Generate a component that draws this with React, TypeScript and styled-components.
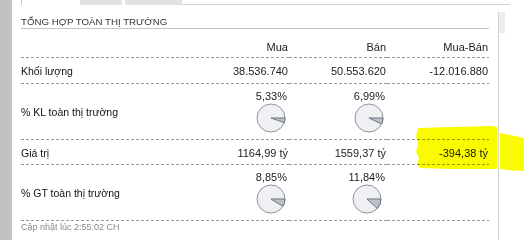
import React from "react";
import styled, { createGlobalStyle } from "styled-components";

const Global = createGlobalStyle`
  html, body { margin: 0; padding: 0; background: #fff; }
  body { width: 524px; height: 240px; overflow: hidden; font-family: "Liberation Sans", Arial, sans-serif; }
`;

const Page = styled.div`
  position: relative;
  display: flex;
  width: 524px;
  height: 240px;
  overflow: hidden;
  background: #fff;
`;

const LeftStrip = styled.div`
  width: 12px;
  flex: none;
  background: #c2c2c2;
`;

const Main = styled.div`
  flex: 1;
  display: flex;
  flex-direction: column;
  min-width: 0;
`;

const TabBar = styled.div`
  display: flex;
  height: 5px;
  flex: none;
`;

const TabSpacer = styled.div`
  width: 9px;
`;

const Tab = styled.div<{ $active?: boolean; $w: number; $gap?: number }>`
  width: ${(p) => p.$w}px;
  margin-left: ${(p) => p.$gap ?? 0}px;
  background: ${(p) => (p.$active ? "#fff" : "#e2e2e2")};
  border-left: ${(p) => (p.$active ? "1px solid #c8c8c8" : "none")};
  box-sizing: border-box;
`;

const TabFill = styled.div`
  flex: 1;
  border-bottom: 1px solid #d4d4d4;
  margin-right: 14px;
`;

const Body = styled.div`
  flex: 1;
  display: flex;
  margin-top: 7px;
`;

const Panel = styled.div`
  width: 487px;
  flex: none;
  box-sizing: border-box;
  border-right: 1px solid #d2d2d2;
  padding: 3px 9px 0 9px;
  display: flex;
  flex-direction: column;
`;

const Scroll = styled.div`
  width: 6px;
  height: 21px;
  background: #eeeeee;
`;

const Title = styled.div`
  font-size: 9.7px;
  color: #333;
  text-transform: uppercase;
  height: 13px;
  line-height: 13px;
  border-bottom: 1px solid #c4c4c4;
`;

const Table = styled.div`
  display: grid;
  grid-template-columns: 1fr 98px 98px 102px;
`;

const dashed = `
  background-image: linear-gradient(to right, #9a9a9a 3px, transparent 3px);
  background-size: 5px 1px;
  background-repeat: repeat-x;
  background-position: 0 100%;
`;

const Cell = styled.div<{ $h: number; $right?: boolean; $label?: boolean }>`
  height: ${(p) => p.$h}px;
  box-sizing: border-box;
  display: flex;
  align-items: center;
  justify-content: ${(p) => (p.$right ? "flex-end" : "flex-start")};
  padding-right: ${(p) => (p.$right ? "1px" : "0")};
  font-size: ${(p) => (p.$label ? "10.5px" : "11px")};
  color: ${(p) => (p.$label ? "#111" : "#222")};
  white-space: nowrap;
  ${dashed}
`;

const HeadCell = styled(Cell)`
  align-items: flex-end;
  padding-bottom: 5px;
`;

const PieBox = styled.div`
  display: flex;
  flex-direction: column;
  align-items: center;
  gap: 1px;
  margin-top: -2px;
  margin-right: 1px;
`;

const Pct = styled.div`
  font-size: 11px;
  color: #222;
  line-height: 12px;
`;

const Footer = styled.div`
  font-size: 9px;
  color: #8a8a8a;
  margin-top: 0px;
  line-height: 12px;
`;

const Highlight = styled.svg`
  position: absolute;
  left: 412px;
  top: 124px;
  mix-blend-mode: multiply;
  pointer-events: none;
`;

function Pie({ pct }: { pct: number }) {
  const r = 14;
  const cx = 15;
  const cy = 15;
  const a = (pct / 100) * Math.PI * 2;
  const x = cx + r * Math.cos(a);
  const y = cy + r * Math.sin(a);
  const large = pct > 50 ? 1 : 0;
  return (
    <svg width="30" height="30" viewBox="0 0 30 30">
      <circle cx={cx} cy={cy} r={r} fill="#eff0f3" stroke="#8f949d" strokeWidth="1" />
      <path
        d={`M${cx} ${cy} L${cx + r} ${cy} A${r} ${r} 0 ${large} 1 ${x} ${y} Z`}
        fill="#bcc1c9"
        stroke="#6f7582"
        strokeWidth="1"
        strokeLinejoin="round"
      />
    </svg>
  );
}

export default function App() {
  return (
    <Page>
      <Global />
      <LeftStrip />
      <Main>
        <TabBar>
          <TabSpacer />
          <Tab $active $w={59} />
          <Tab $w={42} />
          <Tab $w={57} $gap={3} />
          <TabFill />
        </TabBar>
        <Body>
          <Panel>
            <Title>Tổng hợp toàn thị trường</Title>
            <Table>
              <HeadCell $h={29} />
              <HeadCell $h={29} $right>Mua</HeadCell>
              <HeadCell $h={29} $right>Bán</HeadCell>
              <HeadCell $h={29} $right>Mua-Bán</HeadCell>

              <Cell $h={26} $label>Khối lượng</Cell>
              <Cell $h={26} $right>38.536.740</Cell>
              <Cell $h={26} $right>50.553.620</Cell>
              <Cell $h={26} $right>-12.016.880</Cell>

              <Cell $h={56} $label>% KL toàn thị trường</Cell>
              <Cell $h={56} $right>
                <PieBox><Pct>5,33%</Pct><Pie pct={5.33} /></PieBox>
              </Cell>
              <Cell $h={56} $right>
                <PieBox><Pct>6,99%</Pct><Pie pct={6.99} /></PieBox>
              </Cell>
              <Cell $h={56} $right />

              <Cell $h={25} $label>Giá trị</Cell>
              <Cell $h={25} $right>1164,99 tỷ</Cell>
              <Cell $h={25} $right>1559,37 tỷ</Cell>
              <Cell $h={25} $right>-394,38 tỷ</Cell>

              <Cell $h={56} $label>% GT toàn thị trường</Cell>
              <Cell $h={56} $right>
                <PieBox><Pct>8,85%</Pct><Pie pct={8.85} /></PieBox>
              </Cell>
              <Cell $h={56} $right>
                <PieBox><Pct>11,84%</Pct><Pie pct={11.84} /></PieBox>
              </Cell>
              <Cell $h={56} $right />
            </Table>
            <Footer>Cập nhật lúc 2:55:02 CH</Footer>
          </Panel>
          <Scroll />
        </Body>
      </Main>
      <Highlight width="112" height="50" viewBox="0 0 112 50">
        <path
          d="M6 4 L40 3 L80 2 L85 3 L85 45 L40 45 L8 44 L5 40 L7 34 L4 28 L6 20 L4 12 Z"
          fill="#fafa00"
        />
        <path
          d="M88 9 L98 11 L112 14 L112 47 L96 46 L88 45 Z"
          fill="#fafa00"
        />
      </Highlight>
    </Page>
  );
}
